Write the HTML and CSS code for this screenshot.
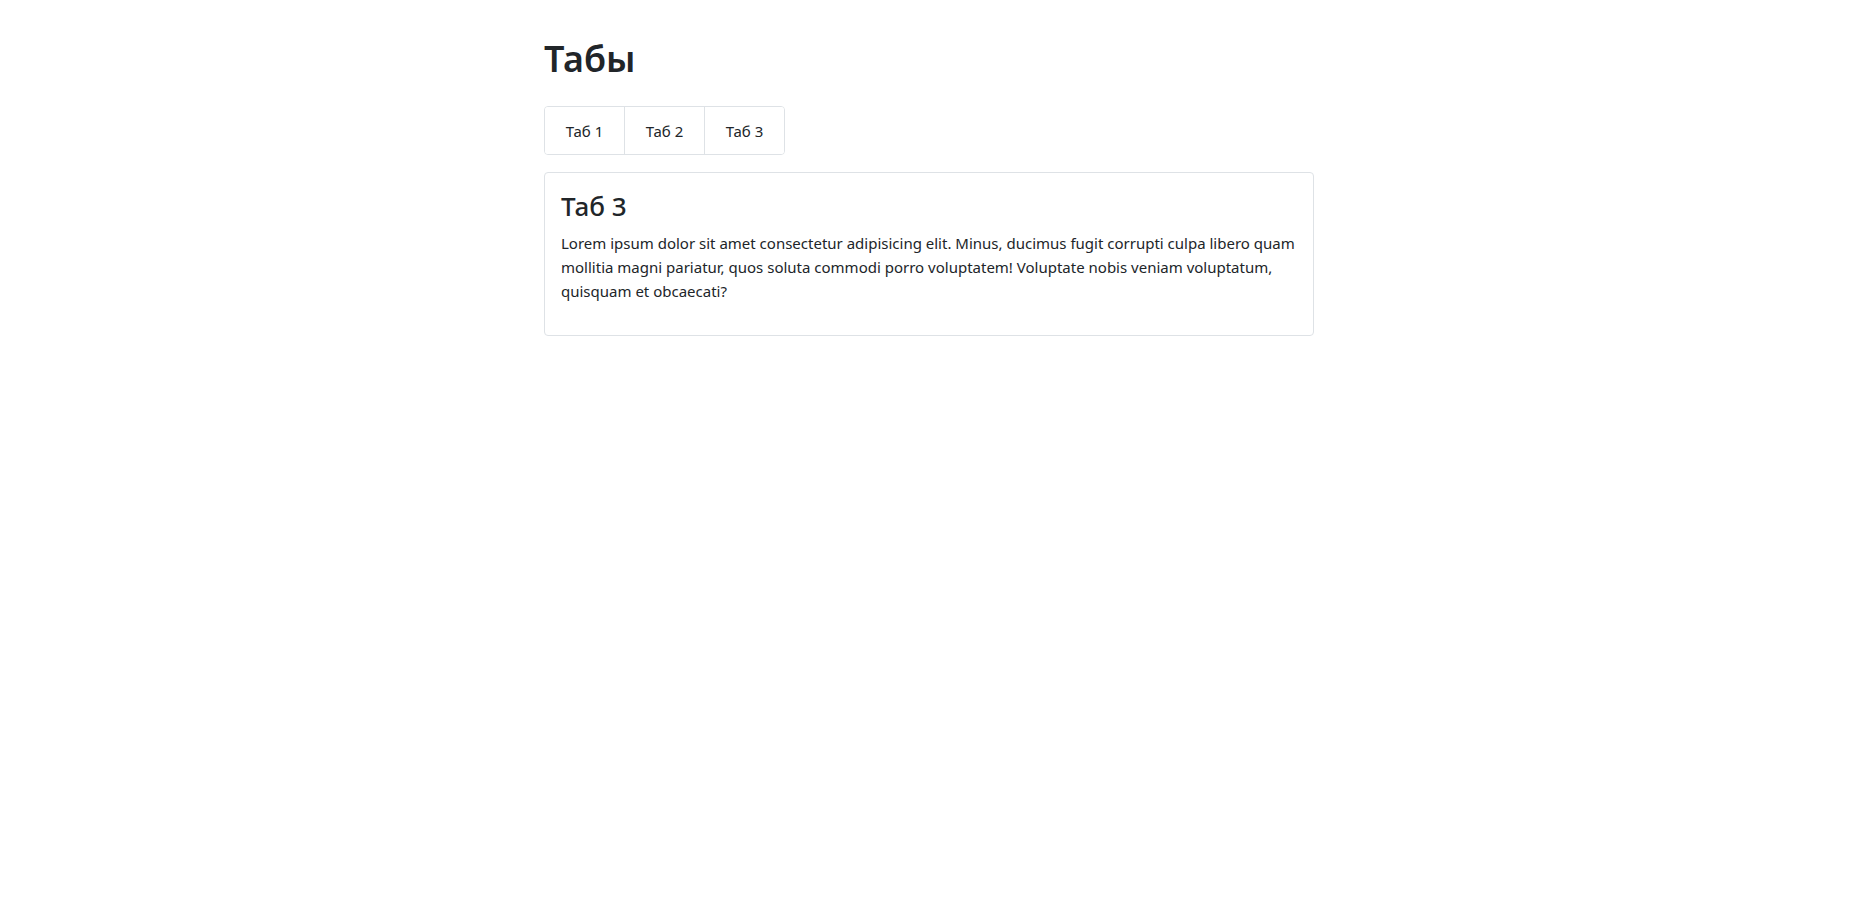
FILE: index.html
```html
<!DOCTYPE html>
<html lang="ru">
<head>
<meta charset="utf-8">
<title>Табы</title>
<link rel="stylesheet" href="styles.css">
</head>
<body>
<div class="container">
  <h1 class="title">Табы</h1>
  <div class="tabs">
    <button class="tab">Таб 1</button>
    <button class="tab">Таб 2</button>
    <button class="tab">Таб 3</button>
  </div>
  <div class="card">
    <h3 class="card-title">Таб 3</h3>
    <p class="card-text">Lorem ipsum dolor sit amet consectetur adipisicing elit. Minus, ducimus fugit corrupti culpa libero quam mollitia magni pariatur, quos soluta commodi porro voluptatem! Voluptate nobis veniam voluptatum, quisquam et obcaecati?</p>
  </div>
</div>
</body>
</html>
```

FILE: styles.css
```css
html, body {
  margin: 0;
  background: #fff;
}
body {
  font-family: "Noto Sans", "Open Sans", sans-serif;
  font-size: 16px;
  line-height: 1.5;
  color: #212529;
}
.container {
  width: 770px;
  margin: 0 auto;
  padding: 35px 0 0 2px;
}
.title {
  margin: 0 0 23px;
  font-size: 36px;
  font-weight: 600;
  line-height: 48px;
}
.tabs {
  display: inline-flex;
  border: 1px solid #dee2e6;
  border-radius: 4px;
  overflow: hidden;
}
.tab {
  width: 80px;
  height: 47px;
  padding: 0;
  border: 0;
  border-left: 1px solid #dee2e6;
  background: #fff;
  font-family: inherit;
  font-size: 15px;
  color: #212529;
  cursor: pointer;
}
.tab:first-child {
  border-left: 0;
  width: 79px;
}
.card {
  margin-top: 17px;
  border: 1px solid #dee2e6;
  border-radius: 4px;
  padding: 16px 16px 0;
}
.card-title {
  margin: 0 0 8px;
  font-size: 26px;
  font-weight: 500;
  line-height: 34px;
}
.card-text {
  margin: 0 0 16px;
  font-size: 15px;
  line-height: 24px;
  padding-bottom: 16px;
}
```
